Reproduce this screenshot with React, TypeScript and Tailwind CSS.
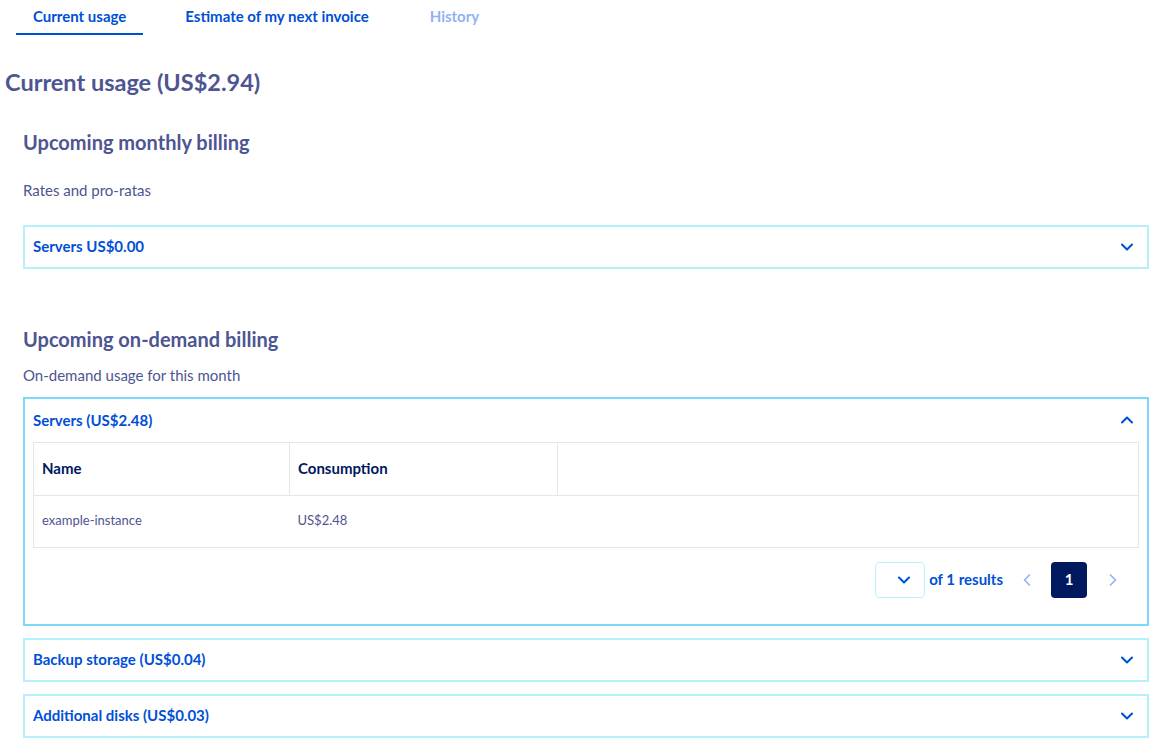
import { ChevronDown, ChevronLeft, ChevronRight, ChevronUp } from "lucide-react";

const font = { fontFamily: "Lato, 'Liberation Sans', sans-serif" };

const tabs = [
  { label: "Current usage", active: true, muted: false },
  { label: "Estimate of my next invoice", active: false, muted: false },
  { label: "History", active: false, muted: true },
];

function Collapsed({ title }: { title: string }) {
  return (
    <div className="flex h-[44px] items-center justify-between border-2 border-[#b7f0fd] bg-white pl-[8px] pr-[10px]">
      <span className="text-[15px] font-bold text-[#0050d7]">{title}</span>
      <ChevronDown className="h-5 w-5 text-[#0050d7]" strokeWidth={2.5} />
    </div>
  );
}

export default function App() {
  return (
    <div className="min-h-[746px] w-[1157px] bg-white text-[#4d5592]" style={font}>
      <div className="flex items-end px-[16px]">
        {tabs.map((t) => (
          <div
            key={t.label}
            className={
              "px-[17px] pb-[5px] pt-[5px] text-[15px] font-bold " +
              (t.active
                ? "border-b-2 border-[#0050d7] text-[#0050d7]"
                : t.muted
                  ? "ml-[27px] border-b-2 border-transparent text-[#8fb3f4]"
                  : "ml-[25px] border-b-2 border-transparent text-[#0050d7]")
            }
          >
            {t.label}
          </div>
        ))}
      </div>

      <h1 className="mt-[31px] pl-[5px] text-[23.5px] font-bold leading-[32px]">
        Current usage (US$2.94)
      </h1>

      <div className="px-[23px] pr-[8px]">
        <h2 className="mt-[30px] text-[20px] font-bold leading-[28px]">Upcoming monthly billing</h2>
        <p className="mt-[24px] text-[15px] leading-[20px]">Rates and pro-ratas</p>
        <div className="mt-[25px]">
          <Collapsed title="Servers US$0.00" />
        </div>

        <h2 className="mt-[56px] text-[20px] font-bold leading-[28px]">Upcoming on-demand billing</h2>
        <p className="mt-[12px] text-[15px] leading-[20px]">On-demand usage for this month</p>

        <div className="mt-[12px] border-2 border-[#7dd8fc] bg-white px-[8px] pb-[26px]">
          <div className="flex h-[43px] items-center justify-between pr-[2px]">
            <span className="text-[15px] font-bold text-[#0050d7]">Servers (US$2.48)</span>
            <ChevronUp className="h-5 w-5 text-[#0050d7]" strokeWidth={2.5} />
          </div>
          <table className="w-full border-collapse border border-[#e6e6e6] text-left">
            <thead>
              <tr className="h-[53px] border-b border-[#e6e6e6]">
                <th className="w-[256px] border-r border-[#e6e6e6] px-[8px] text-[15px] font-bold text-[#00185e]">
                  Name
                </th>
                <th className="w-[268px] border-r border-[#e6e6e6] px-[8px] text-[15px] font-bold text-[#00185e]">
                  Consumption
                </th>
                <th></th>
              </tr>
            </thead>
            <tbody>
              <tr className="h-[52px]">
                <td className="px-[8px] text-[13px]">example-instance</td>
                <td className="px-[8px] text-[13px]">US$2.48</td>
                <td></td>
              </tr>
            </tbody>
          </table>
          <div className="mt-[14px] flex items-center justify-end pr-[16px]">
            <div className="flex h-[36px] w-[50px] items-center justify-center rounded-[4px] border border-[#b7f0fd]">
              <ChevronDown className="ml-[8px] h-5 w-5 text-[#0050d7]" strokeWidth={2.5} />
            </div>
            <span className="ml-[4px] text-[15px] font-bold text-[#0050d7]">of 1 results</span>
            <ChevronLeft className="ml-[14px] h-5 w-5 text-[#8fb3f4]" strokeWidth={2} />
            <div className="ml-[14px] flex h-[36px] w-[36px] items-center justify-center rounded-[4px] bg-[#00185e] text-[15px] font-bold text-white">
              1
            </div>
            <ChevronRight className="ml-[16px] h-5 w-5 text-[#8fb3f4]" strokeWidth={2} />
          </div>
        </div>

        <div className="mt-[12px]">
          <Collapsed title="Backup storage (US$0.04)" />
        </div>
        <div className="mt-[12px]">
          <Collapsed title="Additional disks (US$0.03)" />
        </div>
      </div>
    </div>
  );
}
